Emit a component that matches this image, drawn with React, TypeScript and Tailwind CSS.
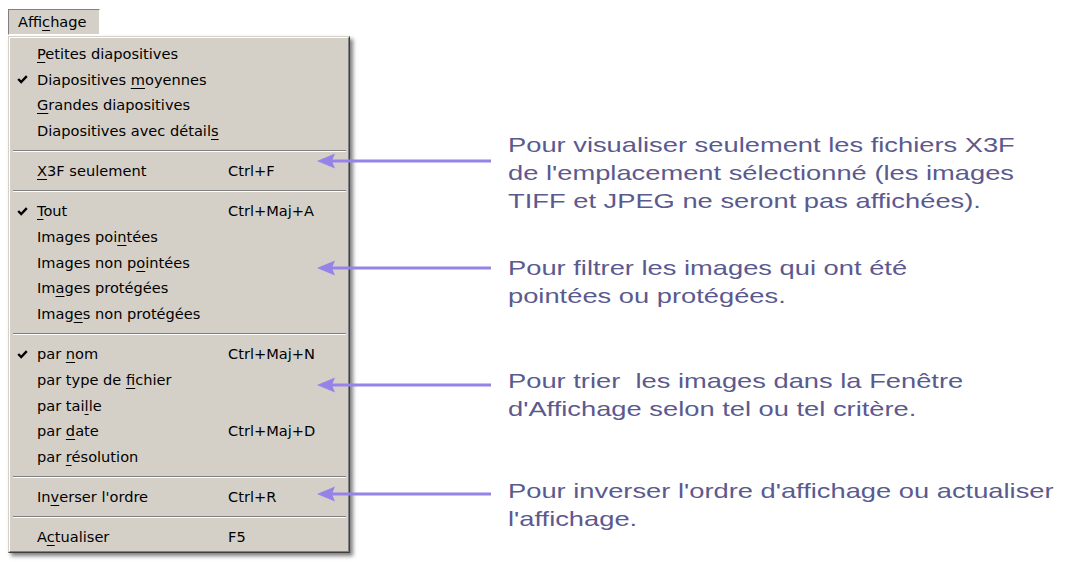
import React from "react";

type Item = { label: string; shortcut?: string; checked?: boolean };

const groups: Item[][] = [
  [
    { label: "&Petites diapositives" },
    { label: "Diapositives &moyennes", checked: true },
    { label: "&Grandes diapositives" },
    { label: "Diapositives avec détail&s" },
  ],
  [{ label: "&X3F seulement", shortcut: "Ctrl+F" }],
  [
    { label: "&Tout", shortcut: "Ctrl+Maj+A", checked: true },
    { label: "Images poi&ntées" },
    { label: "Images non p&ointées" },
    { label: "Im&ages protégées" },
    { label: "Imag&es non protégées" },
  ],
  [
    { label: "par &nom", shortcut: "Ctrl+Maj+N", checked: true },
    { label: "par type de &fichier" },
    { label: "par tai&lle" },
    { label: "par &date", shortcut: "Ctrl+Maj+D" },
    { label: "par &résolution" },
  ],
  [{ label: "In&verser l'ordre", shortcut: "Ctrl+R" }],
  [{ label: "A&ctualiser", shortcut: "F5" }],
];

const notes = [
  {
    lines: [
      "Pour visualiser seulement les fichiers X3F",
      "de l'emplacement sélectionné (les images",
      "TIFF et JPEG ne seront pas affichées).",
    ],
    mt: "mt-[131px]",
    arrow: "top-[22px]",
  },
  {
    lines: ["Pour filtrer les images qui ont été", "pointées ou protégées."],
    mt: "mt-[39px]",
    arrow: "top-[6px]",
  },
  {
    lines: ["Pour trier  les images dans la Fenêtre", "d'Affichage selon tel ou tel critère."],
    mt: "mt-[57px]",
    arrow: "top-[10px]",
  },
  {
    lines: ["Pour inverser l'ordre d'affichage ou actualiser", "l'affichage."],
    mt: "mt-[54px]",
    arrow: "top-[9px]",
  },
];

// "&" marks the access key letter
function Label({ text }: { text: string }) {
  const i = text.indexOf("&");
  if (i < 0) return <>{text}</>;
  return (
    <>
      {text.slice(0, i)}
      <span className="underline decoration-1 underline-offset-[3px]">{text[i + 1]}</span>
      {text.slice(i + 2)}
    </>
  );
}

function Check() {
  return (
    <svg width="11" height="9" viewBox="0 0 11 9" className="ml-[4px]">
      <path d="M1.2 4 L4.2 7 L9.8 1.2" fill="none" stroke="#000" strokeWidth="2.4" />
    </svg>
  );
}

function Arrow({ pos }: { pos: string }) {
  return (
    <svg
      width="174"
      height="16"
      viewBox="0 0 174 16"
      className={`absolute left-[-191px] z-10 ${pos}`}
    >
      <rect x="14" y="6.5" width="160" height="3" fill="#9683e8" />
      <polygon points="0,8 18,0.5 15,8 18,15.5" fill="#9683e8" />
    </svg>
  );
}

export default function App() {
  return (
    <div className="flex w-[1065px] h-[562px] bg-white overflow-hidden">
      <div className="shrink-0 pl-[8px] pt-[9px] w-[350px] font-['DejaVu_Sans',sans-serif] text-[14.6px] text-black">
        <div className="w-[92px] h-[26px] flex items-center pl-[9px] bg-[#d4d0c8] border border-t-[#808080] border-l-[#808080] border-b-white border-r-white">
          <Label text="Affi&chage" />
        </div>
        <div className="mt-[1px] w-[342px] bg-[#d4d0c8] border border-t-[#d4d0c8] border-l-[#d4d0c8] border-r-[#404040] border-b-[#404040] shadow-[3px_3px_4px_rgba(0,0,0,0.5)]">
          <div className="border border-t-white border-l-white border-r-[#808080] border-b-[#808080] pt-[3px] pl-[3px] pb-[1px]">
            {groups.map((g, gi) => (
              <div key={gi}>
                {gi > 0 && (
                  <div className="h-[14.5px] flex items-center pr-[2px]">
                    <div className="w-full h-0 border-t border-b border-t-[#808080] border-b-white" />
                  </div>
                )}
                {g.map((it) => (
                  <div
                    key={it.label}
                    className="grid grid-cols-[24px_191px_1fr] h-[25.7px] items-center whitespace-nowrap"
                  >
                    <div className="flex items-center">{it.checked && <Check />}</div>
                    <div>
                      <Label text={it.label} />
                    </div>
                    <div>{it.shortcut}</div>
                  </div>
                ))}
              </div>
            ))}
          </div>
        </div>
      </div>

      <div className="pl-[158px] flex flex-col font-['Liberation_Sans',Arial,sans-serif] text-[21px] leading-[28px] text-[#5b5a8f]">
        {notes.map((n, i) => (
          <div key={i} className={`relative ${n.mt}`}>
            <Arrow pos={n.arrow} />
            <div className="origin-left scale-x-[1.3] whitespace-nowrap">
              {n.lines.map((l) => (
                <div key={l} className="whitespace-pre">
                  {l}
                </div>
              ))}
            </div>
          </div>
        ))}
      </div>
    </div>
  );
}
